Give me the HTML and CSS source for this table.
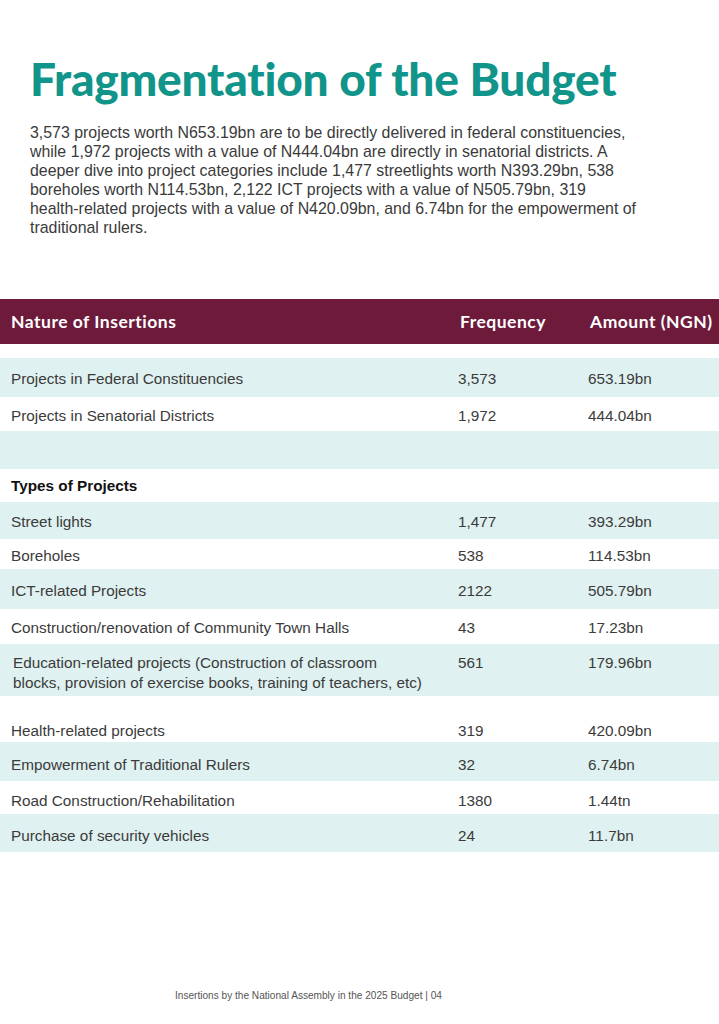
FILE: index.html
```html
<!DOCTYPE html>
<html lang="en">
<head>
<meta charset="utf-8">
<title>Fragmentation of the Budget</title>
<link rel="stylesheet" href="styles.css">
</head>
<body>
<main class="page">
  <h1 class="title">Fragmentation of the Budget</h1>
  <p class="intro">3,573 projects worth N653.19bn are to be directly delivered in federal constituencies,<br>while 1,972 projects with a value of N444.04bn are directly in senatorial districts. A<br>deeper dive into project categories include 1,477 streetlights worth N393.29bn, 538<br>boreholes worth N114.53bn, 2,122 ICT projects with a value of N505.79bn, 319<br>health-related projects with a value of N420.09bn, and 6.74bn for the empowerment of<br>traditional rulers.</p>

  <section class="table">
    <div class="row head">
      <span>Nature of Insertions</span>
      <span>Frequency</span>
      <span>Amount (NGN)</span>
    </div>
    <div class="spacer"></div>
    <div class="row light h39"><span>Projects in Federal Constituencies</span><span>3,573</span><span>653.19bn</span></div>
    <div class="row h34"><span>Projects in Senatorial Districts</span><span>1,972</span><span>444.04bn</span></div>
    <div class="row light h38"><span></span><span></span><span></span></div>
    <div class="row h33 section"><span>Types of Projects</span><span></span><span></span></div>
    <div class="row light h37"><span>Street lights</span><span>1,477</span><span>393.29bn</span></div>
    <div class="row h30"><span>Boreholes</span><span>538</span><span>114.53bn</span></div>
    <div class="row light h40"><span>ICT-related Projects</span><span>2122</span><span>505.79bn</span></div>
    <div class="row h35"><span>Construction/renovation of Community Town Halls</span><span>43</span><span>17.23bn</span></div>
    <div class="row light tall"><span class="indent">Education-related projects (Construction of classroom<br>blocks, provision of exercise books, training of teachers, etc)</span><span>561</span><span>179.96bn</span></div>
    <div class="row padtop"><span>Health-related projects</span><span>319</span><span>420.09bn</span></div>
    <div class="row light h39 low"><span>Empowerment of Traditional Rulers</span><span>32</span><span>6.74bn</span></div>
    <div class="row h33 low"><span>Road Construction/Rehabilitation</span><span>1380</span><span>1.44tn</span></div>
    <div class="row light h38 low"><span>Purchase of security vehicles</span><span>24</span><span>11.7bn</span></div>
  </section>

  <footer class="footer">Insertions by the National Assembly in the 2025 Budget | 04</footer>
</main>
</body>
</html>
```
FILE: styles.css
```css
html, body {
  margin: 0;
  padding: 0;
  background: #ffffff;
}

.page {
  width: 719px;
  min-height: 1024px;
  display: flex;
  flex-direction: column;
}

.title {
  margin: 51px 0 0 30px;
  font-family: "Lato", "Noto Sans", sans-serif;
  font-weight: 900;
  font-size: 46px;
  line-height: 56px;
  color: #11948a;
  letter-spacing: -0.2px;
}

.intro {
  margin: 16px 0 0 30px;
  font-family: "Liberation Sans", Arial, sans-serif;
  font-size: 15.9px;
  line-height: 19px;
  color: #3a3a3a;
}

.table {
  margin-top: 62px;
  display: flex;
  flex-direction: column;
}

.row {
  display: grid;
  grid-template-columns: 447px 130px 1fr;
  align-items: center;
  padding-left: 11px;
  padding-top: 3px;
  box-sizing: border-box;
  font-family: "Liberation Sans", Arial, sans-serif;
  font-size: 15.3px;
  line-height: 20px;
  color: #3b3b3b;
  background: #ffffff;
}

.row.light {
  background: #dff1f0;
}

.row.head {
  height: 45px;
  padding-top: 0;
  background: #6d1a3b;
  color: #ffffff;
  font-family: "Lato", "Noto Sans", sans-serif;
  font-weight: 700;
  font-size: 17.5px;
  letter-spacing: 0.5px;
}

.row.head span:nth-child(n+2) {
  padding-left: 2px;
}

.spacer {
  height: 14px;
}

.h30 { height: 30px; }
.h33 { height: 33px; }
.h34 { height: 34px; }
.h35 { height: 35px; }
.h37 { height: 37px; }
.h38 { height: 38px; }
.h39 { height: 39px; }
.h40 { height: 40px; }

.row.low {
  padding-top: 6px;
}

.row.section {
  padding-top: 0;
  font-weight: 700;
  color: #111111;
}

.row.tall {
  height: 52px;
  align-items: start;
  padding-top: 9px;
}

.indent {
  padding-left: 2px;
}

.row.padtop {
  height: 46px;
  padding-top: 24px;
}

.footer {
  margin: 138px 0 0 175px;
  font-family: "Liberation Sans", Arial, sans-serif;
  font-size: 10.1px;
  line-height: 12px;
  color: #555555;
}
```
